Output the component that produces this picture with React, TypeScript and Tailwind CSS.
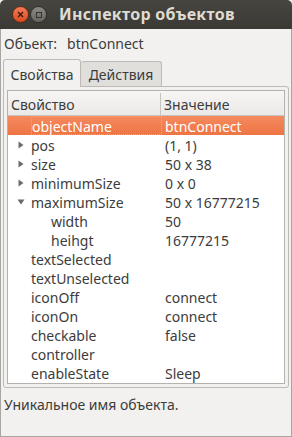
import React from "react";

const rows: { name: string; value: string; indent: number; arrow?: "right" | "down"; selected?: boolean }[] = [
  { name: "objectName", value: "btnConnect", indent: 0, selected: true },
  { name: "pos", value: "(1, 1)", indent: 0, arrow: "right" },
  { name: "size", value: "50 x 38", indent: 0, arrow: "right" },
  { name: "minimumSize", value: "0 x 0", indent: 0, arrow: "right" },
  { name: "maximumSize", value: "50 x 16777215", indent: 0, arrow: "down" },
  { name: "width", value: "50", indent: 1 },
  { name: "heihgt", value: "16777215", indent: 1 },
  { name: "textSelected", value: "", indent: 0 },
  { name: "textUnselected", value: "", indent: 0 },
  { name: "iconOff", value: "connect", indent: 0 },
  { name: "iconOn", value: "connect", indent: 0 },
  { name: "checkable", value: "false", indent: 0 },
  { name: "controller", value: "", indent: 0 },
  { name: "enableState", value: "Sleep", indent: 0 },
];

function Arrow({ dir }: { dir: "right" | "down" }) {
  return (
    <svg width="8" height="8" viewBox="0 0 8 8" className="shrink-0">
      {dir === "right" ? (
        <path d="M1.5 0.5 L6.5 4 L1.5 7.5 Z" fill="#6a6a6a" />
      ) : (
        <path d="M0.5 1.5 L7.5 1.5 L4 6.5 Z" fill="#6a6a6a" />
      )}
    </svg>
  );
}

export default function App() {
  return (
    <div
      className="w-[292px] h-[437px] bg-[#f2f1f0] flex flex-col text-[14px] leading-[19px] text-[#3c3c3c] overflow-hidden"
      style={{ fontFamily: '"Noto Sans", "DejaVu Sans", sans-serif' }}
    >
      {/* Title bar */}
      <div className="h-[29px] shrink-0 flex items-center bg-gradient-to-b from-[#46453f] to-[#3a3935] rounded-t-[5px]">
        <div className="ml-[12px] w-[17px] h-[17px] rounded-full bg-gradient-to-b from-[#f47b55] to-[#d94a1c] border border-[#5a2a18] flex items-center justify-center">
          <svg width="7" height="7" viewBox="0 0 7 7">
            <path d="M1 1 L6 6 M6 1 L1 6" stroke="#3a1a10" strokeWidth="1.4" />
          </svg>
        </div>
        <div className="ml-[1px] w-[17px] h-[17px] rounded-full bg-gradient-to-b from-[#8a8983] to-[#67665f] border border-[#2f2e2a] flex items-center justify-center">
          <div className="w-[6px] h-[6px] border border-[#36352f]" />
        </div>
        <div className="ml-[12px] text-[16px] font-bold text-[#dfdbd2] tracking-[0.3px]">Инспектор объектов</div>
      </div>

      {/* Body */}
      <div className="flex-1 flex flex-col border-x border-b border-[#a8a6a2]">
        <div className="h-[29px] flex items-center pl-[3px]">
          <span>Объект:</span>
          <span className="ml-[10px]">btnConnect</span>
        </div>

        {/* Tabs */}
        <div className="flex px-[2px] h-[28px] items-end relative z-10">
          <div className="h-[28px] w-[78px] flex items-center justify-center border border-[#bdbab5] border-b-0 rounded-t-[3px] bg-[#f2f1f0] text-[#3c3c3c] -mb-[1px] pt-[1px]">
            Свойства
          </div>
          <div className="h-[25px] w-[81px] flex items-center justify-center border border-[#bdbab5] border-b-0 border-l-0 rounded-t-[3px] bg-[#e1dfdc] pt-[1px]">
            Действия
          </div>
        </div>

        {/* Pane */}
        <div className="mx-[2px] h-[302px] border border-[#bdbab5] rounded-b-[3px] rounded-tr-[3px] p-[3px] flex">
          <div className="flex-1 bg-white border border-[#b4b2ad] flex flex-col overflow-hidden">
            {/* header */}
            <div className="h-[25px] shrink-0 flex bg-gradient-to-b from-[#f7f6f5] to-[#ebe9e7] border-b border-[#c6c4c0] pt-[2px]">
              <div className="w-[153px] flex items-center pl-[3px] border-r border-[#c6c4c0]">Свойство</div>
              <div className="flex-1 flex items-center pl-[3px]">Значение</div>
            </div>
            {rows.map((r) => (
              <div
                key={r.name}
                className={
                  "h-[19px] shrink-0 flex items-center " +
                  (r.selected ? "bg-gradient-to-b from-[#f58a5e] to-[#ee7443] text-white" : "")
                }
              >
                <div className="w-[154px] flex items-center h-full">
                  <div className="w-[23px] flex items-center justify-center pl-[2px]">
                    {r.arrow ? <Arrow dir={r.arrow} /> : null}
                  </div>
                  <div
                    className={
                      "h-full flex items-center pt-[2px] " +
                      (r.indent ? "pl-[20px] " : "pl-[0px] ") +
                      (r.selected ? "outline outline-1 outline-dotted outline-[#b8b8b8] -outline-offset-1 w-[131px] pl-[1px]" : "")
                    }
                  >
                    {r.name}
                  </div>
                </div>
                <div className="flex-1 pl-[3px] pt-[2px]">{r.value}</div>
              </div>
            ))}
          </div>
        </div>

        <div className="pl-[3px] pt-[7px]">Уникальное имя объекта.</div>
      </div>
    </div>
  );
}
